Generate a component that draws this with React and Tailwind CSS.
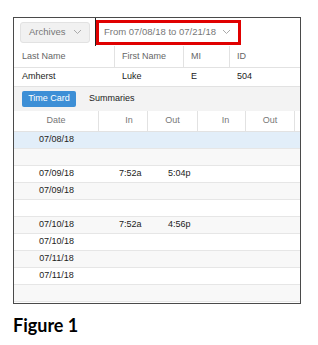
import React from 'react';

const rows = [
  { date: '07/08/18', selected: true },
  { date: '' },
  { date: '07/09/18', in: '7:52a', out: '5:04p' },
  { date: '07/09/18' },
  { date: '' },
  { date: '07/10/18', in: '7:52a', out: '4:56p' },
  { date: '07/10/18' },
  { date: '07/11/18' },
  { date: '07/11/18' },
  { date: '' },
];

function Chevron() {
  return (
    <svg width="9" height="6" viewBox="0 0 9 6" className="ml-auto">
      <path d="M1 1 L4.5 4.5 L8 1" fill="none" stroke="#aaa" strokeWidth="1" />
    </svg>
  );
}

export default function App() {
  return (
    <div className="w-[318px] h-[345px] bg-white pt-[17px] pl-[13px]" style={{ fontFamily: '"Liberation Sans", Arial, sans-serif' }}>
      {/* Frame */}
      <div className="w-[288px] h-[287px] border border-[#4a4a4a] flex flex-col overflow-hidden">
        {/* Toolbar */}
        <div className="h-[28px] flex items-center pl-[6px] shrink-0">
          <div className="w-[70px] h-[21px] bg-[#f1f1f1] border border-[#e2e2e2] rounded-[3px] flex items-center pl-[8px] pr-[7px] text-[9.5px] text-[#777]">
            Archives
            <Chevron />
          </div>
          <div className="w-px h-[28px] bg-[#222] ml-[5px] self-start" />
          <div className="w-[145px] h-[25px] border-[3px] border-[#e00000] flex items-center pl-[5px] pr-[7px] text-[9.5px] text-[#777]">
            From 07/08/18 to 07/21/18
            <Chevron />
          </div>
        </div>

        {/* Employee header */}
        <div className="h-[22px] grid grid-cols-[101px_69px_46px_1fr] border-b border-[#e2e2e2] text-[9px] text-[#666] shrink-0">
          <div className="flex items-center pl-[8px] border-r border-[#e2e2e2]">Last Name</div>
          <div className="flex items-center pl-[7px] border-r border-[#e2e2e2]">First Name</div>
          <div className="flex items-center pl-[7px] border-r border-[#e2e2e2]">MI</div>
          <div className="flex items-center pl-[7px]">ID</div>
        </div>
        <div className="h-[19px] grid grid-cols-[101px_69px_46px_1fr] border-b border-[#e2e2e2] text-[9px] text-[#222] shrink-0">
          <div className="flex items-center pl-[8px]">Amherst</div>
          <div className="flex items-center pl-[7px]">Luke</div>
          <div className="flex items-center pl-[7px]">E</div>
          <div className="flex items-center pl-[7px]">504</div>
        </div>

        {/* Tabs */}
        <div className="h-[24px] bg-[#f3f3f3] flex items-center pl-[8px] gap-[13px] shrink-0">
          <div className="w-[54px] h-[16px] bg-[#3d8fd6] rounded-[2px] flex items-center justify-center text-[9px] text-white">Time Card</div>
          <div className="text-[9px] text-[#222]">Summaries</div>
        </div>

        {/* Time card table */}
        <div className="h-[21px] grid grid-cols-[85px_49px_50px_48px_49px_1fr] border-b border-[#e2e2e2] text-[9px] text-[#777] shrink-0">
          <div className="flex items-center justify-center border-r border-[#e2e2e2]">Date</div>
          <div className="flex items-center justify-center pl-[12px] border-r border-[#e2e2e2]">In</div>
          <div className="flex items-center justify-center border-r border-[#e2e2e2]">Out</div>
          <div className="flex items-center justify-center pl-[8px] border-r border-[#e2e2e2]">In</div>
          <div className="flex items-center justify-center border-r border-[#e2e2e2]">Out</div>
          <div />
        </div>
        {rows.map((r, i) => (
          <div
            key={i}
            className={`h-[17px] grid grid-cols-[85px_49px_50px_1fr] border-b border-[#e6e6e6] text-[9px] text-[#222] shrink-0 ${
              r.selected ? 'bg-[#e2eef9]' : i % 2 === 1 ? 'bg-[#f8f8f8]' : 'bg-white'
            }`}
          >
            <div className="flex items-center justify-center">{r.date}</div>
            <div className="flex items-center pl-[20px]">{r.in}</div>
            <div className="flex items-center pl-[20px]">{r.out}</div>
            <div />
          </div>
        ))}
      </div>

      <div className="mt-[12px] text-[18px] font-bold text-black leading-none" style={{ fontFamily: 'Lato, "Open Sans", sans-serif' }}>
        Figure 1
      </div>
    </div>
  );
}
